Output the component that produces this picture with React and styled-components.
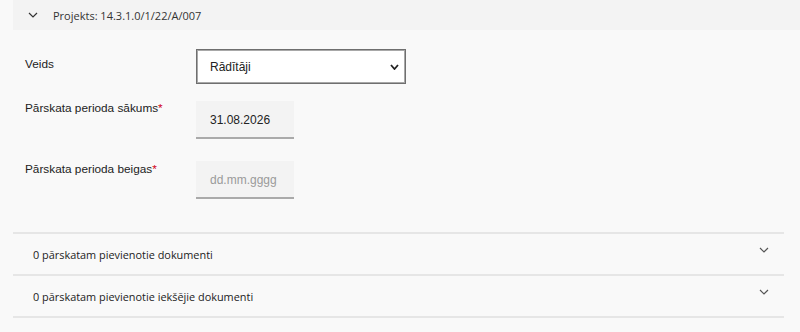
import React from "react";
import styled, { createGlobalStyle } from "styled-components";

const Global = createGlobalStyle`
  html, body { margin: 0; padding: 0; background: #f9f9f9; }
  body { font-family: "Liberation Sans", Arial, sans-serif; color: #222; }
`;

const Page = styled.div`
  width: 800px;
  height: 332px;
  background: #f9f9f9;
  overflow: hidden;
`;

const Header = styled.div`
  margin-left: 13px;
  height: 30px;
  background: #f3f3f3;
  display: flex;
  align-items: center;
  padding-left: 15px;
  gap: 15px;
  font-family: "Open Sans", "Noto Sans", sans-serif;
  font-size: 11px;
  color: #333;
`;

const Chevron = styled.svg`
  display: block;
  flex: none;
`;

const Form = styled.div`
  padding: 19px 0 0 25px;
  display: grid;
  grid-template-columns: 171px auto;
  align-items: start;
`;

const Row = styled.div`
  display: contents;
`;

const Label = styled.div`
  font-size: 11.8px;
  line-height: 15px;
  color: #222;
  padding-top: ${(p) => p.$offset}px;
  margin-bottom: ${(p) => p.$gap}px;
`;

const Req = styled.span`
  color: #d0021b;
`;

const SelectBox = styled.div`
  width: 210px;
  height: 35px;
  box-sizing: border-box;
  border: 1px solid #6f6f6f;
  box-shadow: inset 0 0 0 1px #a8a8a8;
  background: #fff;
  display: flex;
  align-items: center;
  justify-content: space-between;
  padding: 0 6px 0 13px;
  font-size: 12px;
  color: #222;
  margin-bottom: ${(p) => p.$gap}px;
`;

const DateBox = styled.div`
  width: 98px;
  height: 38px;
  box-sizing: border-box;
  background: #f3f3f3;
  border-bottom: 2px solid #aaa;
  display: flex;
  align-items: center;
  padding-left: 14px;
  padding-top: 1px;
  font-size: 12px;
  color: ${(p) => (p.$placeholder ? "#9a9a9a" : "#222")};
  margin-bottom: ${(p) => p.$gap}px;
`;

const Sections = styled.div`
  margin: 33px 16px 0 13px;
  border-top: 2px solid #e6e6e6;
`;

const Section = styled.div`
  height: 40px;
  border-bottom: 2px solid #e6e6e6;
  display: flex;
  justify-content: space-between;
  padding: 0 15px 0 20px;
  font-family: "Open Sans", "Noto Sans", sans-serif;
  font-size: 10.9px;
  color: #222;
`;

const SectionTitle = styled.div`
  padding-top: 13px;
`;

const SectionIcon = styled.div`
  padding-top: 13px;
`;

const ChevronIcon = ({ w = 9, h = 5, color = "#444", sw = 1.3 }) => (
  <Chevron width={w + 2} height={h + 2} viewBox={`-1 -1 ${w + 2} ${h + 2}`}>
    <polyline points={`0,0 ${w / 2},${h} ${w},0`} fill="none" stroke={color} strokeWidth={sw} />
  </Chevron>
);

export default function App() {
  return (
    <Page>
      <Global />
      <Header>
        <ChevronIcon w={8} h={4} color="#333" sw={1.2} />
        <span>Projekts: 14.3.1.0/1/22/A/007</span>
      </Header>
      <Form>
        <Row>
          <Label $offset={8} $gap={17}>Veids</Label>
          <SelectBox $gap={17}>
            <span>Rādītāji</span>
            <ChevronIcon w={7} h={4} color="#222" sw={1.8} />
          </SelectBox>
        </Row>
        <Row>
          <Label $offset={0} $gap={22}>
            Pārskata perioda sākums<Req>*</Req>
          </Label>
          <DateBox $gap={22}>31.08.2026</DateBox>
        </Row>
        <Row>
          <Label $offset={1} $gap={0}>
            Pārskata perioda beigas<Req>*</Req>
          </Label>
          <DateBox $placeholder $gap={0}>dd.mm.gggg</DateBox>
        </Row>
      </Form>
      <Sections>
        <Section>
          <SectionTitle>0 pārskatam pievienotie dokumenti</SectionTitle>
          <SectionIcon><ChevronIcon w={8} h={4} color="#555" sw={1.2} /></SectionIcon>
        </Section>
        <Section>
          <SectionTitle>0 pārskatam pievienotie iekšējie dokumenti</SectionTitle>
          <SectionIcon><ChevronIcon w={8} h={4} color="#555" sw={1.2} /></SectionIcon>
        </Section>
      </Sections>
    </Page>
  );
}
